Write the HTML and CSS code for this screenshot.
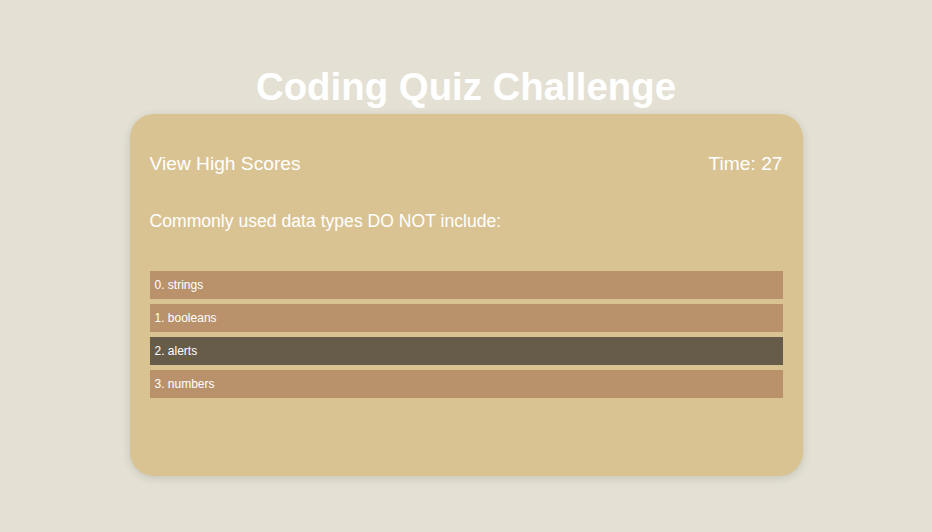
FILE: index.html
```html
<!DOCTYPE html>
<html>
<head>
<meta charset="utf-8">
<link rel="stylesheet" href="styles.css">
</head>
<body>
<h1 class="title">Coding Quiz Challenge</h1>
<main class="card">
  <header class="bar">
    <a class="scores">View High Scores</a>
    <span class="timer">Time: 27</span>
  </header>
  <p class="question">Commonly used data types DO NOT include:</p>
  <ul class="answers">
    <li class="answer">0. strings</li>
    <li class="answer">1. booleans</li>
    <li class="answer selected">2. alerts</li>
    <li class="answer">3. numbers</li>
  </ul>
</main>
</body>
</html>
```
FILE: styles.css
```css
html, body {
  margin: 0;
  padding: 0;
}
body {
  background: #e4e1d4;
  font-family: "Liberation Sans", Arial, sans-serif;
  color: #fff;
  height: 532px;
  overflow: hidden;
}
.title {
  margin: 65px 0 5px;
  text-align: center;
  font-size: 38.4px;
  line-height: 44px;
  font-weight: bold;
  color: #fff;
}
.card {
  box-sizing: border-box;
  width: 673px;
  height: 362px;
  margin: 0 auto;
  padding: 39px 20px 0;
  background: #dac393;
  border-radius: 24px;
  box-shadow: 0 2px 8px rgba(0, 0, 0, 0.14);
}
.bar {
  display: flex;
  justify-content: space-between;
  align-items: center;
  font-size: 19.2px;
  line-height: 22px;
}
.scores {
  color: #fff;
}
.question {
  margin: 36px 0 0;
  font-size: 17.6px;
  line-height: 21px;
}
.answers {
  list-style: none;
  margin: 39px 0 0;
  padding: 0;
  display: flex;
  flex-direction: column;
  gap: 5px;
}
.answer {
  height: 28px;
  line-height: 28px;
  padding: 0 5px;
  font-size: 12px;
  background: #b9926b;
  color: #fff;
}
.answer.selected {
  background: #675c4a;
}
```
